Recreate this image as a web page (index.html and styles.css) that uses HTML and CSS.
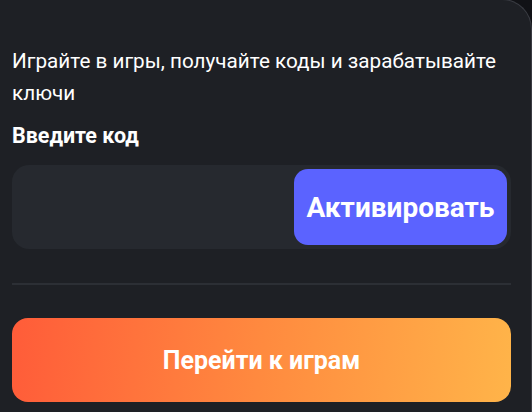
FILE: index.html
```html
<!DOCTYPE html>
<html lang="ru">
<head>
<meta charset="utf-8">
<link rel="stylesheet" href="styles.css">
</head>
<body>
<div class="card">
  <p class="intro">Играйте в игры, получайте коды и зарабатывайте ключи</p>
  <div class="label">Введите код</div>
  <div class="code-box">
    <input class="code-input" type="text" aria-label="Код">
    <button class="activate">Активировать</button>
  </div>
  <hr class="divider">
  <button class="play">Перейти к играм</button>
</div>
</body>
</html>
```
FILE: styles.css
```css
html, body {
  margin: 0;
  padding: 0;
  background: #111216;
  height: 100%;
  overflow: hidden;
}
body {
  font-family: Roboto, "Liberation Sans", sans-serif;
  color: #ffffff;
}
.card {
  box-sizing: border-box;
  margin: -1px 0 0 -10px;
  width: 542px;
  height: 413px;
  background: #1e2025;
  border: 1px solid #3a3c43;
  border-bottom: none;
  border-radius: 0 30px 0 0;
  padding: 45px 20px 0 21px;
}
.intro {
  margin: 0;
  font-size: 20.7px;
  line-height: 32px;
  font-weight: 400;
}
.label {
  margin-top: 13px;
  font-size: 21.5px;
  line-height: 28px;
  font-weight: 700;
}
.code-box {
  margin-top: 15px;
  height: 84px;
  box-sizing: border-box;
  background: #26292f;
  border-radius: 17px;
  display: flex;
  align-items: stretch;
  padding: 4px 4px 4px 0;
}
.code-input {
  flex: 1;
  min-width: 0;
  background: transparent;
  border: none;
  outline: none;
  color: #fff;
  font: inherit;
  padding: 0 16px;
}
.activate {
  width: 213px;
  border: none;
  border-radius: 14px;
  background: #5b63ff;
  color: #fff;
  font-family: Roboto, "Liberation Sans", sans-serif;
  font-size: 28px;
  font-weight: 700;
  text-align: center;
  padding: 0;
  white-space: nowrap;
}
.divider {
  margin: 34px 0 0 0;
  border: none;
  height: 2px;
  background: #2c2f35;
}
.play {
  display: block;
  margin-top: 33px;
  width: 100%;
  height: 84px;
  border: none;
  border-radius: 16px;
  background: linear-gradient(95deg, #ff5c39 0%, #ff8a3f 50%, #ffb449 100%);
  color: #fff;
  font-family: Roboto, "Liberation Sans", sans-serif;
  font-size: 25px;
  font-weight: 700;
}
```
